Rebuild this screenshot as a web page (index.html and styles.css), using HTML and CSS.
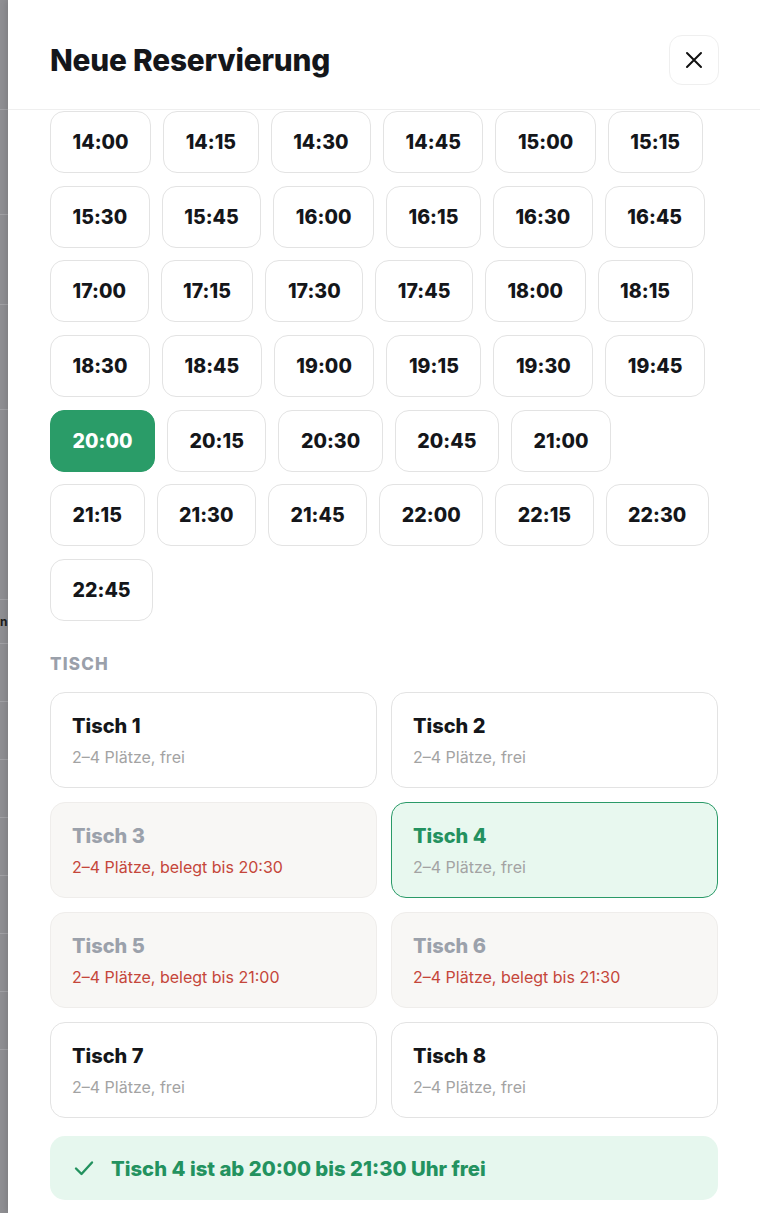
FILE: index.html
```html
<!DOCTYPE html>
<html lang="de">
<head>
<meta charset="utf-8">
<title>Neue Reservierung</title>
<link rel="stylesheet" href="styles.css">
</head>
<body>
<div class="screen">
  <div class="backdrop">
    <div class="bd-row h110"></div>
    <div class="bd-row h105"></div>
    <div class="bd-row h90"></div>
    <div class="bd-row h105"></div>
    <div class="bd-row h190"></div>
    <div class="bd-row h44 bd-word">n</div>
    <div class="bd-row h58"></div>
    <div class="bd-row h58"></div>
    <div class="bd-row h58"></div>
    <div class="bd-row h58"></div>
    <div class="bd-row h58"></div>
    <div class="bd-row h58"></div>
    <div class="bd-row h58"></div>
  </div>
  <div class="panel">
    <header class="panel-head">
      <h1 class="title">Neue Reservierung</h1>
      <button class="close" aria-label="Schließen">
        <svg width="18" height="18" viewBox="0 0 18 18"><path d="M2 2L16 16M16 2L2 16" stroke="#111" stroke-width="2" stroke-linecap="round"/></svg>
      </button>
    </header>
    <div class="panel-body">
      <div class="times">
        <div class="trow"><button class="time">14:00</button><button class="time">14:15</button><button class="time">14:30</button><button class="time">14:45</button><button class="time">15:00</button><button class="time">15:15</button></div>
        <div class="trow"><button class="time">15:30</button><button class="time">15:45</button><button class="time">16:00</button><button class="time">16:15</button><button class="time">16:30</button><button class="time">16:45</button></div>
        <div class="trow"><button class="time">17:00</button><button class="time">17:15</button><button class="time">17:30</button><button class="time">17:45</button><button class="time">18:00</button><button class="time">18:15</button></div>
        <div class="trow"><button class="time">18:30</button><button class="time">18:45</button><button class="time">19:00</button><button class="time">19:15</button><button class="time">19:30</button><button class="time">19:45</button></div>
        <div class="trow"><button class="time selected">20:00</button><button class="time">20:15</button><button class="time">20:30</button><button class="time">20:45</button><button class="time">21:00</button></div>
        <div class="trow"><button class="time">21:15</button><button class="time">21:30</button><button class="time">21:45</button><button class="time">22:00</button><button class="time">22:15</button><button class="time">22:30</button></div>
        <div class="trow"><button class="time">22:45</button></div>
      </div>

      <div class="section-label">TISCH</div>

      <div class="tables">
        <div class="table-card"><div class="t-name">Tisch 1</div><div class="t-info">2–4 Plätze, frei</div></div>
        <div class="table-card"><div class="t-name">Tisch 2</div><div class="t-info">2–4 Plätze, frei</div></div>
        <div class="table-card busy"><div class="t-name">Tisch 3</div><div class="t-info">2–4 Plätze, belegt bis 20:30</div></div>
        <div class="table-card chosen"><div class="t-name">Tisch 4</div><div class="t-info">2–4 Plätze, frei</div></div>
        <div class="table-card busy"><div class="t-name">Tisch 5</div><div class="t-info">2–4 Plätze, belegt bis 21:00</div></div>
        <div class="table-card busy"><div class="t-name">Tisch 6</div><div class="t-info">2–4 Plätze, belegt bis 21:30</div></div>
        <div class="table-card"><div class="t-name">Tisch 7</div><div class="t-info">2–4 Plätze, frei</div></div>
        <div class="table-card"><div class="t-name">Tisch 8</div><div class="t-info">2–4 Plätze, frei</div></div>
      </div>

      <div class="notice">
        <svg class="check" width="20" height="16" viewBox="0 0 20 16"><path d="M2 8.5L7.5 14L18 2.5" fill="none" stroke="#23925f" stroke-width="2.4" stroke-linecap="round" stroke-linejoin="round"/></svg>
        <span>Tisch 4 ist ab 20:00 bis 21:30 Uhr frei</span>
      </div>
    </div>
  </div>
</div>
</body>
</html>
```

FILE: styles.css
```css
* { box-sizing: border-box; }
html, body { margin: 0; padding: 0; }
body {
  font-family: Inter, "Noto Sans", "Liberation Sans", sans-serif;
  background: #8e8e92;
  color: #111;
  width: 760px;
  height: 1213px;
  overflow: hidden;
}
.screen {
  display: flex;
  height: 1213px;
}
.backdrop {
  width: 8px;
  flex: none;
  background: #8f8f93;
  overflow: hidden;
  display: flex;
  flex-direction: column;
}
.bd-row { flex: none; border-bottom: 1px solid #a2a2a6; }
.h110 { height: 110px; }
.h105 { height: 105px; }
.h90 { height: 90px; }
.h190 { height: 190px; }
.h44 { height: 44px; }
.h58 { height: 58px; }
.bd-word {
  font-weight: 700;
  font-size: 12px;
  line-height: 44px;
  color: #1a1a1a;
  text-align: left;
}
.panel {
  flex: 1;
  min-width: 0;
  overflow: hidden;
  background: #fff;
  box-shadow: -2px 0 6px rgba(0,0,0,0.12);
  display: flex;
  flex-direction: column;
}
.panel-head {
  height: 110px;
  flex: none;
  display: flex;
  align-items: center;
  justify-content: space-between;
  padding: 10px 41px 0 42px;
  border-bottom: 1px solid #efefef;
}
.title {
  margin: 0;
  font-size: 29.8px;
  font-weight: 800;
  letter-spacing: -0.2px;
  color: #14161a;
}
.close {
  width: 50px;
  height: 50px;
  border: 1px solid #efefef;
  border-radius: 13px;
  background: #fff;
  display: flex;
  align-items: center;
  justify-content: center;
  padding: 0;
}
.panel-body {
  padding: 1px 42px 0 42px;
}
.times {
  display: flex;
  flex-direction: column;
  gap: 12.7px;
}
.trow {
  display: flex;
  gap: 12px;
}
.time {
  flex: none;
  height: 62px;
  padding: 0 21.5px;
  border: 1.5px solid #e3e3e3;
  border-radius: 14px;
  background: #fff;
  font-family: inherit;
  font-size: 19.5px;
  font-weight: 800;
  color: #14161a;
  letter-spacing: 0.05px;
}
.time.selected {
  background: #2a9c68;
  border-color: #2a9c68;
  color: #fff;
}
.section-label {
  margin-top: 33px;
  font-size: 17px;
  font-weight: 800;
  letter-spacing: 1.2px;
  color: #9aa0aa;
  line-height: 20px;
}
.tables {
  margin-top: 18px;
  display: grid;
  grid-template-columns: 1fr 1fr;
  column-gap: 14px;
  row-gap: 14px;
}
.table-card {
  height: 96px;
  border: 1.5px solid #e3e3e3;
  border-radius: 15px;
  background: #fff;
  padding: 20px 20px 0 21px;
}
.t-name {
  font-size: 20px;
  font-weight: 800;
  color: #14161a;
  line-height: 26px;
}
.t-info {
  margin-top: 8px;
  font-size: 16px;
  color: #a3a3a3;
  line-height: 20px;
}
.table-card.busy {
  background: #f8f7f5;
  border-color: #efedeb;
}
.table-card.busy .t-name { color: #9ba1ab; }
.table-card.busy .t-info { color: #c5463a; }
.table-card.chosen {
  background: #e8f8ef;
  border-color: #2a9a68;
}
.table-card.chosen .t-name { color: #23915f; }
.notice {
  margin-top: 18px;
  height: 64px;
  border-radius: 15px;
  background: #e6f7ee;
  display: flex;
  align-items: center;
  padding-left: 24px;
  gap: 17px;
  font-size: 20.3px;
  font-weight: 800;
  color: #23925f;
}
.check { flex: none; }
```
